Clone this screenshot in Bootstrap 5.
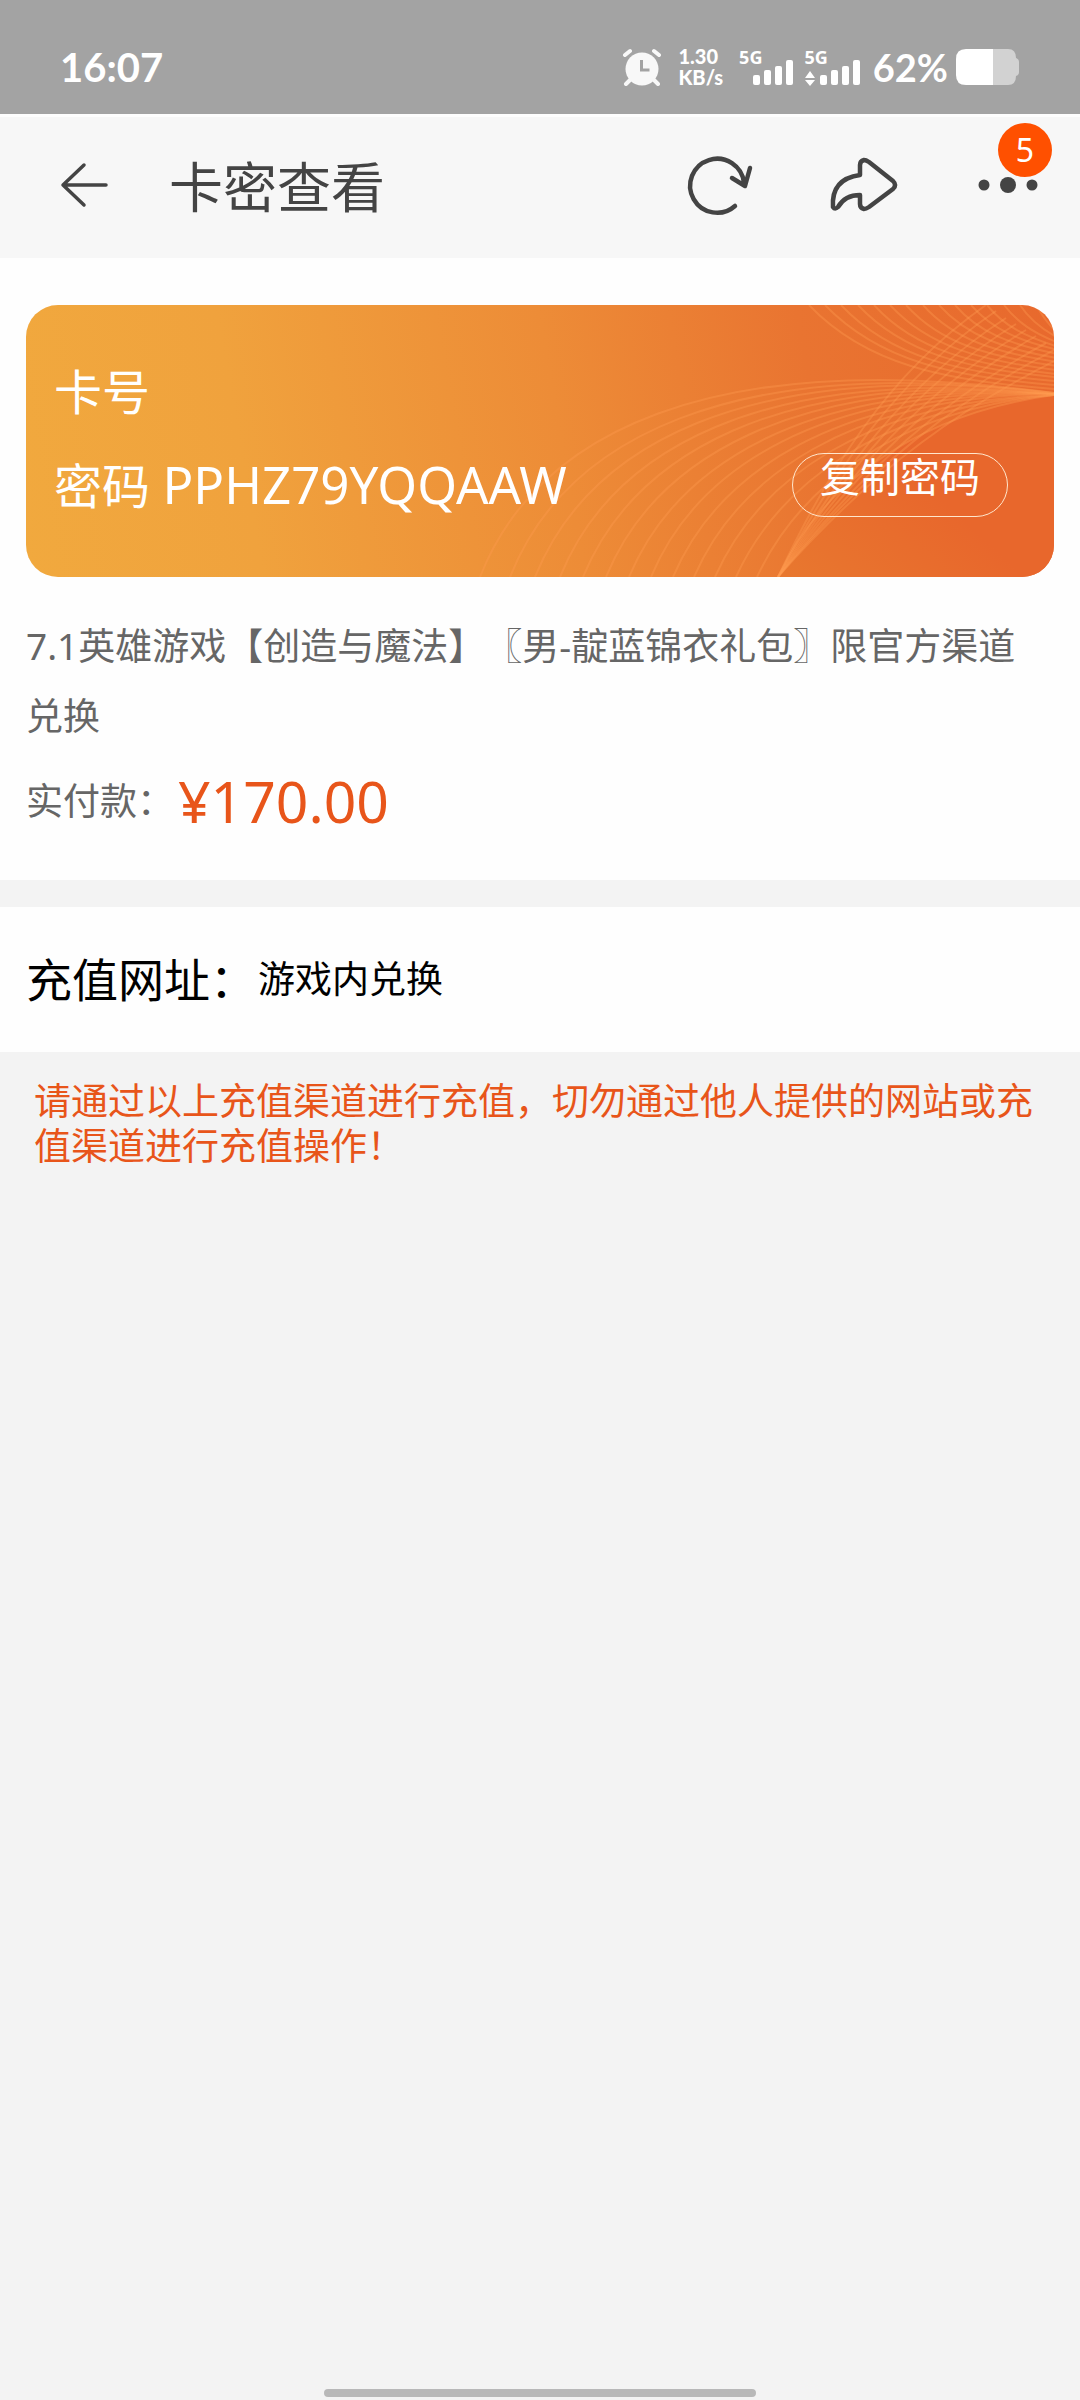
<!DOCTYPE html>
<html lang="zh-CN">
<head>
<meta charset="utf-8">
<meta name="viewport" content="width=device-width, initial-scale=1">
<title>卡密查看</title>
<link href="https://cdn.jsdelivr.net/npm/bootstrap@5.3.0/dist/css/bootstrap.min.css" rel="stylesheet">
<style>
  body { background: #f3f3f3; font-family: "Noto Sans", "Noto Sans CJK SC", sans-serif; font-size: 37px; line-height: 45px; color: #000; text-spacing-trim: space-all; }
  svg { display: block; flex-shrink: 0; }
  .status-bar { background: #a3a3a3; color: #fff; height: 114px; padding: 20px 60px 0; }
  .clock { font: 700 40px/48px Lato, sans-serif; }
  .percent { font: 700 38px/48px Lato, sans-serif; margin-left: 11px; }
  .net-speed { font: 900 20px/21px Lato, sans-serif; }
  .net-type { font-size: 18px; line-height: 18px; font-weight: 700; margin-right: -10px; }
  .net-type.busy { margin: 0 -24px 0 -14px; }
  .title-bar { background: #f7f7f7; height: 144px; border-top: 3px solid #fdfdfd; padding: 0 38px 5px 52px; color: #444; }
  .title-bar h1 { font: 400 54px/64px "Noto Sans CJK SC", sans-serif; margin-left: 51px; }
  .tool { border: 0; background: none; padding: 0; color: inherit; }
  .tools { gap: 64px; }
  .count-badge { top: -30px; right: -10px; width: 54px; height: 54px; background: #ff5000; color: #fff; font-size: 32px; line-height: 54px; }
  .sheet { background: #fefefe; }
  .order { padding: 47px 26px 39px; }
  .code-card { height: 272px; border-radius: 32px; background: linear-gradient(80deg, #f1a93e 0%, #f0a23d 22%, #ed8c37 52%, #e97431 76%, #e8692d 100%); color: #fff; padding: 40px 46px 0 28px; font-size: 48px; line-height: 93px; }
  .code-card .art { position: absolute; inset: 0; width: 100%; height: 100%; }
  .code { font-size: 51px; }
  .copy-btn { border: 1px solid #ffe6cc; border-radius: 32px; background: none; color: #fff; width: 216px; height: 64px; padding: 0 0 16px; font-size: 40px; line-height: 46px; }
  .goods { color: #666; line-height: 70px; margin-top: 34px; padding-right: 24px; }
  .paid { color: #666; line-height: 80px; margin-top: 10px; gap: 4px; }
  .price { color: #e8551a; font-size: 57px; }
  .recharge { margin-top: 27px; padding: 38px 26px 39px; line-height: 68px; gap: 2px; }
  .recharge dt { font-size: 46px; font-weight: 400; }
  .warn { color: #e8551a; padding: 26px 34px; }
  .home-bar { width: 40%; height: 8px; border-radius: 4px; background: #b8b8b8; margin-bottom: 3px; }
</style>
</head>
<body class="min-vh-100 d-flex flex-column">
<header>
  <div class="status-bar d-flex align-items-center justify-content-between">
    <span class="clock">16:07</span>
    <div class="d-flex align-items-center">
      <svg width="40" height="38" viewBox="0 0 40 38" fill="#f8f8f8" stroke="#f8f8f8" stroke-linecap="round"><circle cx="20" cy="21" r="16.500" stroke="none"/><path d="M3 7l5-4M37 7l-5-4M8 32l-4 4M32 32l4 4" stroke-width="4" fill="none"/><path d="M19.500 12v10h8" fill="none" stroke="#a3a3a3" stroke-width="3" stroke-linecap="butt"/></svg>
      <div class="net-speed ms-3"><div>1.30</div><div>KB/s</div></div>
      <div class="d-flex ms-3">
        <span class="net-type">5G</span>
        <svg width="66" height="38" viewBox="0 0 66 38" fill="#fff"><rect x="1" y="27" width="7" height="10" rx="2"/><rect x="12" y="22" width="7" height="15" rx="2"/><rect x="23" y="18" width="7" height="19" rx="2"/><rect x="34" y="12" width="7" height="25" rx="2"/></svg>
      </div>
      <div class="d-flex">
        <span class="net-type busy">5G</span>
        <svg width="58" height="38" viewBox="0 0 58 38" fill="#fff"><path d="M1 30l5-7 5 7zM1 32l5 6 5-6z"/><rect x="16" y="27" width="7" height="10" rx="2"/><rect x="27" y="22" width="7" height="15" rx="2"/><rect x="38" y="18" width="7" height="19" rx="2"/><rect x="49" y="12" width="7" height="25" rx="2"/></svg>
      </div>
      <span class="percent">62%</span>
      <svg class="ms-2" width="64" height="36" viewBox="0 0 64 36"><path d="M37 0h15q8 0 8 9 3 1 3 4v10q0 3-3 4 0 9-8 9H37z" fill="#d2d2d2"/><path d="M37 0H10Q0 0 0 10v16q0 10 10 10h27z" fill="#fff"/></svg>
    </div>
  </div>
  <nav class="title-bar d-flex align-items-center" aria-label="页面导航">
    <button class="tool" type="button" aria-label="返回"><svg width="66" height="56" viewBox="0 0 66 56" fill="none" stroke="#444" stroke-width="3.500" stroke-linecap="round" stroke-linejoin="round"><path d="M54 28H11M32 8L11 28l21 20"/></svg></button>
    <h1 class="mb-0">卡密查看</h1>
    <div class="tools d-flex align-items-center ms-auto">
      <button class="tool" type="button" aria-label="刷新"><svg width="80" height="64" viewBox="0 0 80 64" fill="none" stroke="#444" stroke-width="4.500" stroke-linecap="round" stroke-linejoin="round"><path d="M53 53A27 27 0 1 1 62 30M50 25l13 8 5-18"/></svg></button>
      <button class="tool" type="button" aria-label="分享"><svg width="80" height="64" viewBox="3 0 80 64" fill="none" stroke="#444" stroke-width="4.500" stroke-linecap="round" stroke-linejoin="round"><path d="M37 22V12q0-4 4-5 2 0 5 2L70 28q4 4 0 8L46 54q-3 2-5 2-4-1-4-5V42Q22 42 15 54q-3 3-5 0Q8 26 37 22z"/></svg></button>
      <button class="tool position-relative" type="button" aria-label="更多，5条消息"><svg width="72" height="64" viewBox="18 0 72 64" fill="#444"><circle cx="32" cy="32" r="5.500"/><circle cx="56" cy="32" r="8"/><circle cx="80" cy="32" r="5.500"/></svg><span class="count-badge position-absolute rounded-circle text-center">5</span></button>
    </div>
  </nav>
</header>
<main class="flex-grow-1">
  <section class="sheet order">
    <div class="code-card position-relative overflow-hidden">
      <svg class="art" viewBox="0 0 1028 272" preserveAspectRatio="xMaxYMid slice" fill="none" aria-hidden="true">
        <defs><linearGradient id="swell" x1="0" y1="1" x2="1" y2="0.300"><stop offset="0" stop-color="#e8782f"/><stop offset=".6" stop-color="#e8672c"/></linearGradient></defs>
        <path d="M752 272C790 190 880 110 1028 90V272z" fill="url(#swell)"/>
        <g id="waves" stroke="#ff9b50" stroke-opacity=".36" stroke-width="2"></g>
      </svg>
      <div class="position-relative">
        <div>卡号</div>
        <div class="d-flex align-items-center justify-content-between">
          <span>密码 <span class="code">PPHZ79YQQAAW</span></span>
          <button class="copy-btn" type="button">复制密码</button>
        </div>
      </div>
    </div>
    <p class="goods mb-0">7.1英雄游戏【创造与魔法】〖男-靛蓝锦衣礼包〗限官方渠道兑换</p>
    <div class="paid d-flex align-items-center"><span>实付款：</span><span class="price">¥170.00</span></div>
  </section>
  <dl class="sheet recharge d-flex align-items-center mb-0">
    <dt>充值网址：</dt>
    <dd class="mb-0">游戏内兑换</dd>
  </dl>
  <p class="warn mb-0">请通过以上充值渠道进行充值，切勿通过他人提供的网站或充值渠道进行充值操作！</p>
</main>
<div class="home-bar mx-auto"></div>
<script src="https://cdn.jsdelivr.net/npm/bootstrap@5.3.0/dist/js/bootstrap.bundle.min.js"></script>
<script>
  // Each family fans out between two cubic curves: [x0,y0, c1x,c1y, c2x,c2y, x1,y1]
  const families = [
    { a: [454,272,510,130,680,40,1028,88], b: [752,272,790,190,880,110,1028,90], n: 14, ease: .9 },
    { a: [783,0,840,60,920,76,1028,84], b: [1010,0,1016,10,1022,20,1034,30], n: 15, ease: 1 },
    { a: [752,272,800,170,860,70,960,0], b: [752,272,850,160,940,100,1040,50], n: 9, ease: 1 }
  ];
  const waves = document.getElementById('waves');
  for (const f of families) {
    for (let i = 0; i < f.n; i++) {
      const t = Math.pow(i / (f.n - 1), f.ease);
      const p = f.a.map((v, k) => Math.round(v + (f.b[k] - v) * t));
      const path = document.createElementNS('http://www.w3.org/2000/svg', 'path');
      path.setAttribute('d', `M${p[0]} ${p[1]}C${p.slice(2).join(' ')}`);
      waves.appendChild(path);
    }
  }
</script>
</body>
</html>
